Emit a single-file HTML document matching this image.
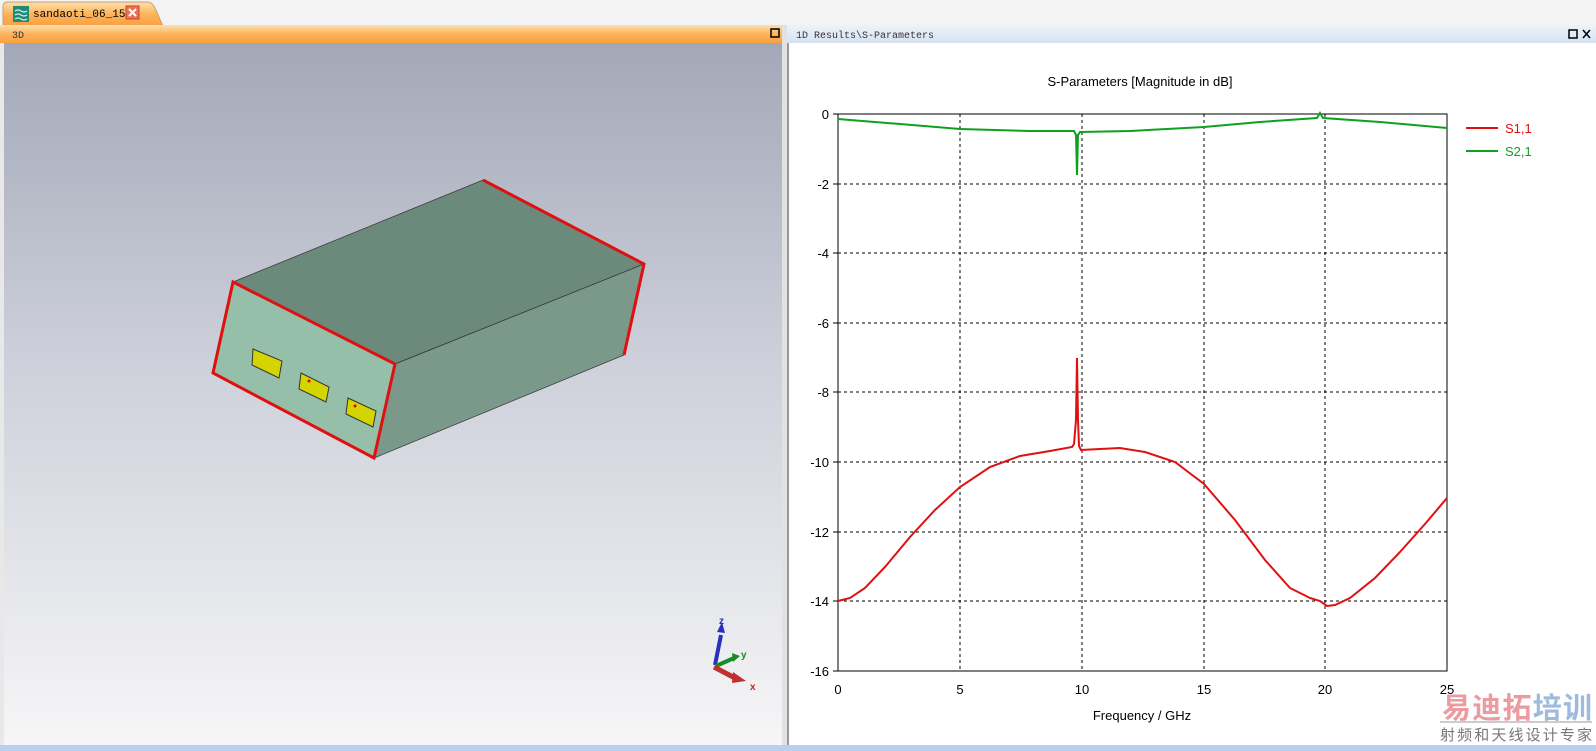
<!DOCTYPE html>
<html><head><meta charset="utf-8"><style>
body{margin:0;width:1596px;height:751px;overflow:hidden;background:#fff;font-family:"Liberation Sans",sans-serif;position:relative}
.abs{position:absolute}
</style></head><body>
<div class="abs" style="left:0;top:0;width:1596px;height:26px;background:#f3f3f3"></div>
<svg class="abs" style="left:0;top:0" width="1596" height="751">
<defs>
<linearGradient id="org" x1="0" y1="0" x2="0" y2="1"><stop offset="0" stop-color="#fde0b0"/><stop offset="0.5" stop-color="#fdb45a"/><stop offset="1" stop-color="#f9a040"/></linearGradient>
<linearGradient id="bg3d" x1="0" y1="0" x2="0" y2="1"><stop offset="0" stop-color="#a3a8b8"/><stop offset="0.45" stop-color="#cdd0da"/><stop offset="1" stop-color="#f6f6f7"/></linearGradient>
<linearGradient id="blu" x1="0" y1="0" x2="0" y2="1"><stop offset="0" stop-color="#eef3fa"/><stop offset="1" stop-color="#d6e2f2"/></linearGradient>
</defs>
<path d="M3,26 L3,6 Q3,2 8,2 L148,2 Q152,2 155,8 L163,26 Z" fill="url(#org)" stroke="#c8a070"/>
<rect x="13" y="6" width="16" height="16" fill="#1f8a78"/>
<path d="M15,11 q3,-2 6,0 t6,0 M15,15 q3,-2 6,0 t6,0 M15,19 q3,-2 6,0 t6,0" stroke="#cdeee8" fill="none" stroke-width="1.2"/>
<text x="33" y="17" font-family="Liberation Mono" font-size="11" fill="#000">sandaoti_06_151</text>
<rect x="126" y="6" width="13" height="13" fill="#e9735a" stroke="#c04a30"/>
<path d="M129,9 l7,7 M136,9 l-7,7" stroke="#fff" stroke-width="2"/>
<rect x="0" y="25" width="784" height="18" fill="url(#org)"/>
<text x="12" y="38" font-family="Liberation Mono" font-size="10" fill="#333">3D</text>
<rect x="771" y="29" width="8" height="8" fill="none" stroke="#000" stroke-width="1.5"/>
<rect x="0" y="43" width="4" height="703" fill="#e8e8e8"/>
<rect x="4" y="43" width="778" height="703" fill="url(#bg3d)"/>
<rect x="782" y="25" width="5" height="721" fill="#e2e2e2"/>
<rect x="787" y="25" width="809" height="18" fill="url(#blu)"/>
<text x="796" y="38" font-family="Liberation Mono" font-size="10" fill="#333">1D Results\S-Parameters</text>
<rect x="1569" y="30" width="8" height="8" fill="none" stroke="#000" stroke-width="1.5"/>
<path d="M1583,30 l7,8 M1590,30 l-7,8" stroke="#000" stroke-width="1.5"/>
<line x1="788" y1="43" x2="788" y2="746" stroke="#999" stroke-width="2"/>
<rect x="0" y="745" width="1596" height="6" fill="#b9cff0"/>
<polygon points="233,282 483,180 644,264 395,364" fill="#6b8a7c" stroke="#333" stroke-width="0.7"/>
<polygon points="395,364 644,264 624,355 374,458" fill="#7a998a" stroke="#333" stroke-width="0.7"/>
<polygon points="233,282 395,364 374,458 213,373" fill="#96bfaa"/>
<polygon points="233,282 395,364 374,458 213,373" fill="none" stroke="#e01010" stroke-width="3"/>
<polyline points="483,180 644,264 624,355" fill="none" stroke="#e01010" stroke-width="3"/>
<polygon points="253,349 282,361 279,378 252,365" fill="#d4d400" stroke="#333"/>
<polygon points="301,373 329,387 326,402 299,389" fill="#d4d400" stroke="#333"/>
<polygon points="348,398 376,411 373,427 346,414" fill="#d4d400" stroke="#333"/>
<circle cx="309" cy="381" r="1.5" fill="#e00"/><circle cx="355" cy="406" r="1.5" fill="#e00"/>
<line x1="715" y1="665" x2="721" y2="635" stroke="#2830c0" stroke-width="4"/>
<polygon points="717,632 725,633 722,622" fill="#2830c0"/>
<text x="719" y="624" font-size="10" font-weight="bold" fill="#2830c0">z</text>
<line x1="716" y1="666" x2="734" y2="658" stroke="#1a8a2a" stroke-width="4"/>
<polygon points="732,653 740,656 733,662" fill="#1a8a2a"/>
<text x="741" y="658" font-size="10" font-weight="bold" fill="#1a8a2a">y</text>
<line x1="714" y1="667" x2="735" y2="678" stroke="#c03030" stroke-width="5"/>
<polygon points="733,672 746,681 732,683" fill="#c03030"/>
<text x="750" y="690" font-size="10" font-weight="bold" fill="#d02020">x</text>
<text x="1140" y="86" font-size="13" text-anchor="middle" fill="#000">S-Parameters [Magnitude in dB]</text>
<g stroke="#000" stroke-dasharray="3,3" stroke-width="1">
<line x1="960" y1="114" x2="960" y2="671"/><line x1="1082" y1="114" x2="1082" y2="671"/><line x1="1204" y1="114" x2="1204" y2="671"/><line x1="1325" y1="114" x2="1325" y2="671"/>
<line x1="838" y1="184" x2="1447" y2="184"/><line x1="838" y1="253" x2="1447" y2="253"/><line x1="838" y1="323" x2="1447" y2="323"/><line x1="838" y1="392" x2="1447" y2="392"/><line x1="838" y1="462" x2="1447" y2="462"/><line x1="838" y1="532" x2="1447" y2="532"/><line x1="838" y1="601" x2="1447" y2="601"/>
</g>
<rect x="838" y="114" width="609" height="557" fill="none" stroke="#000"/>
<g stroke="#000"><line x1="833" y1="114" x2="838" y2="114"/><line x1="833" y1="184" x2="838" y2="184"/><line x1="833" y1="253" x2="838" y2="253"/><line x1="833" y1="323" x2="838" y2="323"/><line x1="833" y1="392" x2="838" y2="392"/><line x1="833" y1="462" x2="838" y2="462"/><line x1="833" y1="532" x2="838" y2="532"/><line x1="833" y1="601" x2="838" y2="601"/><line x1="833" y1="671" x2="838" y2="671"/></g>
<g font-size="13" text-anchor="end" fill="#000">
<text x="829" y="119">0</text><text x="829" y="189">-2</text><text x="829" y="258">-4</text><text x="829" y="328">-6</text><text x="829" y="397">-8</text><text x="829" y="467">-10</text><text x="829" y="537">-12</text><text x="829" y="606">-14</text><text x="829" y="676">-16</text>
</g>
<g font-size="13" text-anchor="middle" fill="#000">
<text x="838" y="694">0</text><text x="960" y="694">5</text><text x="1082" y="694">10</text><text x="1204" y="694">15</text><text x="1325" y="694">20</text><text x="1447" y="694">25</text>
<text x="1142" y="720">Frequency / GHz</text>
</g>
<path d="M838,119 L900,124 L960,129 L1030,131 L1074,131 L1076,135 L1077,175 L1078,135 L1080,132 L1130,131 L1204,127 L1260,122 L1317,118 L1320,113 L1323,118 L1380,122 L1447,128" fill="none" stroke="#10a020" stroke-width="2"/>
<path d="M838,601 L850,598 L865,588 L885,567 L910,537 L935,510 L960,487 L990,467 L1020,456 L1050,451 L1072,447 L1074,444 L1076,420 L1077,358 L1078,420 L1079,446 L1081,450 L1100,449 L1120,448 L1145,452 L1175,462 L1204,484 L1235,520 L1265,560 L1290,588 L1310,598 L1320,601 L1327,606 L1335,605 L1350,598 L1375,578 L1400,552 L1425,524 L1447,498" fill="none" stroke="#e01010" stroke-width="2"/>
<line x1="1466" y1="128" x2="1498" y2="128" stroke="#e01010" stroke-width="2"/>
<text x="1505" y="133" font-size="13" fill="#e01010">S1,1</text>
<line x1="1466" y1="151" x2="1498" y2="151" stroke="#10a020" stroke-width="2"/>
<text x="1505" y="156" font-size="13" fill="#10a020">S2,1</text>
<text x="1442" y="718" font-family="Noto Sans CJK SC,sans-serif" font-size="29" font-weight="bold" fill="#e98a90" opacity="0.85" textLength="150">易迪拓<tspan fill="#8fb0d6">培训</tspan></text>
<line x1="1440" y1="722" x2="1592" y2="722" stroke="#999"/>
<text x="1440" y="740" font-family="Noto Sans CJK SC,sans-serif" font-size="15" fill="#777" textLength="152">射频和天线设计专家</text>
</svg>
</body></html>
